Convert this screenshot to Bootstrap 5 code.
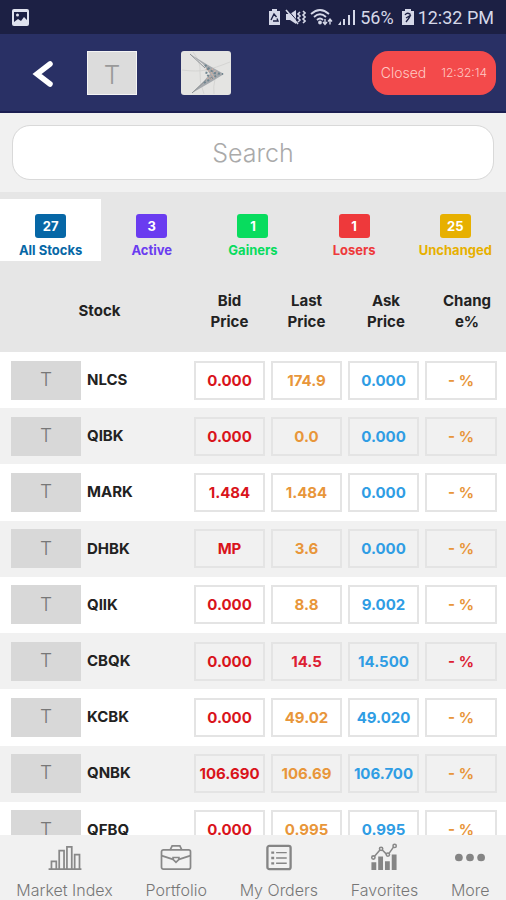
<!DOCTYPE html>
<html lang="en">
<head>
<meta charset="utf-8">
<meta name="viewport" content="width=device-width, initial-scale=1">
<title>Stocks</title>
<link rel="stylesheet" href="https://cdn.jsdelivr.net/npm/bootstrap@5.3.0/dist/css/bootstrap.min.css">
<style>
body { font-family: Inter, "Open Sans", sans-serif; background: #f1f1f1; color: #222; }
.status-strip { background: #1c2044; color: #d5d8e8; height: 34px; padding: 0 12px; font: 18px Roboto, sans-serif; }
.top-bar { background: #293065; height: 79px; padding: 0 10px 0 32px; border-bottom: 2px solid #1b1f52; }
.back-btn { width: 24px; height: 32px; }
.logo-box { width: 50px; height: 44px; }
.logo-t { background: #dcdcdc; color: #999; border: 1px solid #f4f4f4; font-size: 26px; font-weight: 300; margin-left: 31px; padding-top: 4px; }
.logo-play { margin-left: 44px; }
.market-state { background: #f34a4b; color: #ffc9c4; height: 44px; border-radius: 16px; padding: 0 9px; gap: 15px; font-size: 14px; font-weight: 300; }
.market-state time { font-size: 12px; }
.search-area { padding: 12px 12px; height: 79px; }
.search-field { height: 55px; border: 1px solid #d9d9d9; border-radius: 18px; font-size: 25px; font-weight: 300; }
.search-field::placeholder { color: #aaa; }
.filter-bar { background: #e6e6e6; padding-top: 7px; }
.filter-tab { color: var(--tone); font-size: 13px; font-weight: 700; line-height: 16px; height: 62px; padding: 12px 0 0; border: 0; background: transparent; }
.filter-tab.selected { background: #fff; }
.filter-count { background: var(--tone); color: #fff; width: 31px; height: 24px; border-radius: 3px; margin: 0 auto 4px; font-size: 13px; line-height: 24px; }
.tone-blue { --tone: #0667a6; }
.tone-violet { --tone: #6a3cf0; }
.tone-green { --tone: #08dc5e; }
.tone-red { --tone: #ee393b; }
.tone-gold { --tone: #e7b000; }
.stock-scroll { overflow-y: auto; scrollbar-width: none; min-height: 0; }
.stock-scroll::-webkit-scrollbar { display: none; }
.stock-table { table-layout: fixed; height: 597px; font-size: 15px; font-weight: 700; }
.stock-table th.col-stock { width: 191px; padding-left: 8px; }
.stock-table th { height: 91px; background: #e6e6e6; padding: 8px 0 0; line-height: 21px; vertical-align: middle; }
.stock-table th.col-ask { padding-left: 5px; }
.stock-table th.col-change { width: 84px; padding: 8px 12px 0 18px; word-break: break-all; }
.stock-table td { padding: 8px 3px; vertical-align: middle; }
.stock-table td:first-child { padding-left: 11px; }
.stock-table td:last-child { padding-right: 9px; }
.stock-table tbody tr { background: #fff; }
.stock-table tbody tr:nth-child(even) { background: #f1f1f1; }
.tile { width: 70px; height: 39px; margin-right: 6px; background: #d8d8d8; color: #777; font-size: 19px; font-weight: 300; }
.val { height: 39px; border: 2px solid #e4e4e4; line-height: 36px; text-align: center; color: #e8963a; }
.val.bid { color: #d9141b; }
.val.ask { color: #2f9de4; }
.val.down { color: #dd2033; }
.tab-nav { background: #f1f1f1; height: 65px; padding-top: 8px; }
.tab-nav a { color: #777; font-size: 16px; font-weight: 300; line-height: 20px; }
.tab-nav svg { height: 30px; margin-bottom: 8px; }
</style>
<script src="https://cdn.jsdelivr.net/npm/bootstrap@5.3.0/dist/js/bootstrap.bundle.min.js"></script>
</head>
<body>
<div class="d-flex flex-column vh-100">
  <div class="status-strip d-flex align-items-center justify-content-between flex-shrink-0">
    <svg width="17" height="17" viewBox="0 0 17 17" aria-hidden="true"><rect width="17" height="17" rx="2" fill="#dfe2ee"/><path d="M2 3h13v8l-3-3-3 4-3-2-4 3z" fill="#1c2044"/><circle cx="5.500" cy="6" r="1.500" fill="#dfe2ee"/></svg>
    <div class="d-flex align-items-center gap-1">
      <svg width="13" height="18" viewBox="0 0 13 18" fill="currentColor" aria-hidden="true"><path d="M4 1h5v2h3v14H1V3h3z"/><g fill="none" stroke="#1c2044" stroke-width="1.400"><path d="M4 10l2-4 2.500 3M9 10.500l1 2.500H5M3 12l1-2"/></g></svg>
      <svg width="21" height="18" viewBox="0 0 21 18" fill="currentColor" aria-hidden="true"><path d="M1 6h4l6-4v14l-6-4H1z"/><path d="M2 1l12 14" stroke="#1c2044" stroke-width="1"/><path d="M1 2l12 14M15 4l-2 2 2 2-2 2 2 2-2 2M18 3l2 2-2 2 2 2-2 2 2 2-2 2" stroke="currentColor" stroke-width="1.600" fill="none"/></svg>
      <svg width="24" height="18" viewBox="0 0 24 18" fill="none" stroke="currentColor" stroke-width="1.800" aria-hidden="true"><path d="M1 6q9-8 18 0M4 9q6-5.500 12 0M7 12q3-3 6 0"/><circle cx="10" cy="14.500" r="1" fill="currentColor"/><path d="M15 11v5m-2-2l2 2.500 2-2.500M20 16.500v-5m-2 2l2-2.500 2 2.500" stroke-width="1.400"/></svg>
      <svg width="18" height="18" viewBox="0 0 18 18" fill="currentColor" aria-hidden="true"><path d="M0 17l3-4v4zM5 11h2v6H5zM10 7h2v10h-2zM15 2h2v15h-2z"/></svg>
      <span>56%</span>
      <svg class="ms-1" width="12" height="18" viewBox="0 0 12 18" aria-hidden="true"><path d="M3 1h6v2h3v14H0V3h3z" fill="currentColor"/><path d="M3 7q2-3 5-1 1 2-1 4l-3 4M4 10l5-3" fill="none" stroke="#1c2044" stroke-width="1.300"/></svg>
      <span>12:32 PM</span>
    </div>
  </div>

  <header class="top-bar d-flex align-items-center flex-shrink-0">
    <button type="button" class="back-btn btn p-0 border-0 d-flex" aria-label="Back"><svg width="24" height="32" viewBox="0 0 24 32" fill="none" stroke="#fff" stroke-width="5.500" stroke-linecap="round"><path d="M18 7L5 17l13 10"/></svg></button>
    <div class="logo-box logo-t d-flex align-items-center justify-content-center">T</div>
    <svg class="logo-box logo-play" viewBox="0 0 50 44" aria-hidden="true"><rect width="50" height="44" rx="3" fill="#e4e4e2"/><path d="M1 19q15 2 24 0t24-8M12 1q8 10 7 20t4 22M34 28q-2 8-1 15" fill="none" stroke="#d5d5d3"/><path d="M9 3l18 11 16 9-13 8-19 11 11-11 7-8-7-10z" fill="#a5a9ad"/><path d="M9 3l15 14M11 42l14-13" stroke="#8e9396" stroke-width="1"/><path d="M24 14l9 8 9 1M23 32l8-5 6-3M27 17l-2 6 5 4" fill="none" stroke="#6f858f" stroke-width="2" stroke-dasharray="2 2"/><path d="M25 18l7 5-6 5M31 18l5 4M30 28l4-3" fill="none" stroke="#d1b2a4" stroke-width="2" stroke-dasharray="1 2"/></svg>
    <div class="market-state d-flex align-items-center ms-auto"><span>Closed</span><time>12:32:14</time></div>
  </header>

  <div class="search-area flex-shrink-0">
    <input type="text" class="search-field form-control text-center" placeholder="Search" aria-label="Search">
  </div>

  <div class="filter-bar row row-cols-5 g-0 flex-shrink-0">
    <button type="button" class="col filter-tab selected tone-blue"><span class="filter-count d-block">27</span>All Stocks</button>
    <button type="button" class="col filter-tab tone-violet"><span class="filter-count d-block">3</span>Active</button>
    <button type="button" class="col filter-tab tone-green"><span class="filter-count d-block">1</span>Gainers</button>
    <button type="button" class="col filter-tab tone-red"><span class="filter-count d-block">1</span>Losers</button>
    <button type="button" class="col filter-tab tone-gold"><span class="filter-count d-block">25</span>Unchanged</button>
  </div>

  <main class="stock-scroll flex-grow-1">
    <table class="stock-table w-100">
      <thead><tr class="text-center"><th class="col-stock">Stock</th><th>Bid<br>Price</th><th>Last<br>Price</th><th class="col-ask">Ask<br>Price</th><th class="col-change">Change%</th></tr></thead>
      <tbody>
        <tr><td><div class="d-flex align-items-center"><span class="tile d-flex align-items-center justify-content-center">T</span><span>NLCS</span></div></td><td><div class="val bid">0.000</div></td><td><div class="val">174.9</div></td><td><div class="val ask">0.000</div></td><td><div class="val">- %</div></td></tr>
        <tr><td><div class="d-flex align-items-center"><span class="tile d-flex align-items-center justify-content-center">T</span><span>QIBK</span></div></td><td><div class="val bid">0.000</div></td><td><div class="val">0.0</div></td><td><div class="val ask">0.000</div></td><td><div class="val">- %</div></td></tr>
        <tr><td><div class="d-flex align-items-center"><span class="tile d-flex align-items-center justify-content-center">T</span><span>MARK</span></div></td><td><div class="val bid">1.484</div></td><td><div class="val">1.484</div></td><td><div class="val ask">0.000</div></td><td><div class="val">- %</div></td></tr>
        <tr><td><div class="d-flex align-items-center"><span class="tile d-flex align-items-center justify-content-center">T</span><span>DHBK</span></div></td><td><div class="val bid">MP</div></td><td><div class="val">3.6</div></td><td><div class="val ask">0.000</div></td><td><div class="val">- %</div></td></tr>
        <tr><td><div class="d-flex align-items-center"><span class="tile d-flex align-items-center justify-content-center">T</span><span>QIIK</span></div></td><td><div class="val bid">0.000</div></td><td><div class="val">8.8</div></td><td><div class="val ask">9.002</div></td><td><div class="val">- %</div></td></tr>
        <tr><td><div class="d-flex align-items-center"><span class="tile d-flex align-items-center justify-content-center">T</span><span>CBQK</span></div></td><td><div class="val bid">0.000</div></td><td><div class="val down">14.5</div></td><td><div class="val ask">14.500</div></td><td><div class="val down">- %</div></td></tr>
        <tr><td><div class="d-flex align-items-center"><span class="tile d-flex align-items-center justify-content-center">T</span><span>KCBK</span></div></td><td><div class="val bid">0.000</div></td><td><div class="val">49.02</div></td><td><div class="val ask">49.020</div></td><td><div class="val">- %</div></td></tr>
        <tr><td><div class="d-flex align-items-center"><span class="tile d-flex align-items-center justify-content-center">T</span><span>QNBK</span></div></td><td><div class="val bid">106.690</div></td><td><div class="val">106.69</div></td><td><div class="val ask">106.700</div></td><td><div class="val">- %</div></td></tr>
        <tr><td><div class="d-flex align-items-center"><span class="tile d-flex align-items-center justify-content-center">T</span><span>QFBQ</span></div></td><td><div class="val bid">0.000</div></td><td><div class="val">0.995</div></td><td><div class="val ask">0.995</div></td><td><div class="val">- %</div></td></tr>
      </tbody>
    </table>
  </main>

  <nav class="tab-nav d-flex justify-content-around text-center flex-shrink-0">
    <a href="#" class="text-decoration-none d-flex flex-column align-items-center"><svg width="34" viewBox="0 0 34 30" fill="none" stroke="#888" stroke-width="1.800"><path d="M0 27h34M3 27v-8h5v8M11 27V8h5v19M19 27V4h5v23M27 27V12h5v15"/></svg>Market Index</a>
    <a href="#" class="text-decoration-none d-flex flex-column align-items-center"><svg width="34" viewBox="0 0 34 30" fill="none" stroke="#888" stroke-width="1.800"><rect x="2" y="7" width="30" height="20" rx="2"/><path d="M11 7l2-4h8l2 4M2 13l12 4M32 13l-12 4"/><path d="M14 15h6v2l-3 3-3-3z"/></svg>Portfolio</a>
    <a href="#" class="text-decoration-none d-flex flex-column align-items-center"><svg width="28" viewBox="0 0 28 30" fill="none" stroke="#858585"><rect x="2" y="3" width="24" height="24" rx="2" stroke-width="2.400"/><path d="M11 10h11M11 15.500h11M11 21h11" stroke-width="1.400"/><path d="M6 10h3M6 15.500h3M6 21h3" stroke-width="2.400"/></svg>My Orders</a>
    <a href="#" class="text-decoration-none d-flex flex-column align-items-center"><svg width="28" viewBox="0 0 28 30" fill="none" stroke="#888" stroke-width="1.600"><path d="M1 20h5v8H1zM8 14h5v14H8zM15 19h5v9h-5zM22 12h5v16h-5z" fill="#858585" stroke="none"/><path d="M4 14l6-7M12 7l5 5M19 11l5-7"/><circle cx="3" cy="15" r="1.700"/><circle cx="11" cy="6" r="1.700"/><circle cx="18" cy="12" r="1.700"/><circle cx="25" cy="3" r="1.700"/></svg>Favorites</a>
    <a href="#" class="text-decoration-none d-flex flex-column align-items-center"><svg width="32" viewBox="0 0 32 30" fill="#858585"><circle cx="4.500" cy="15" r="4"/><circle cx="16" cy="15" r="4"/><circle cx="27.500" cy="15" r="4"/></svg>More</a>
  </nav>
</div>
</body>
</html>
